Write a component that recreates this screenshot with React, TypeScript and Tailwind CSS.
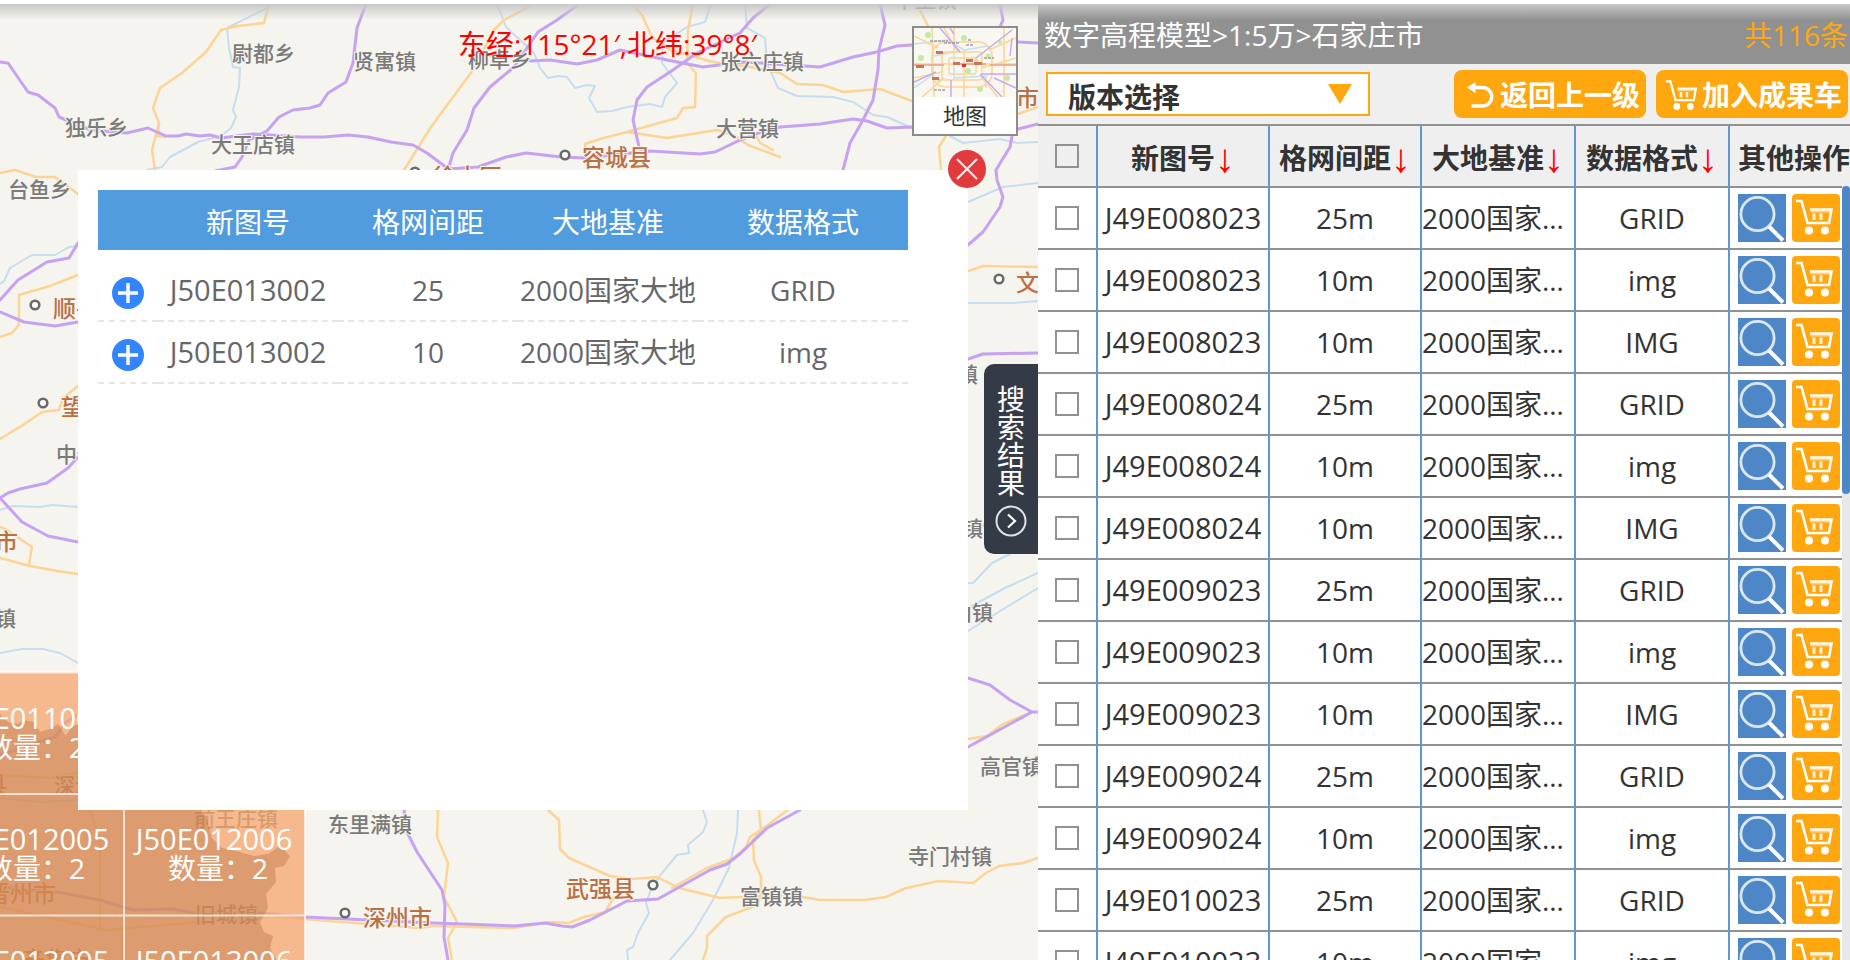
import { useState } from 'react';

interface ResultItem {
  code: string;
  spacing: string;
  datum: string;
  format: string;
}

interface MapLabel {
  text: string;
  x: number;
  y: number;
  city?: boolean;
}

const DATUM = '2000国家大地';

const results: ResultItem[] = [
  { code: 'J49E008023', spacing: '25m', datum: DATUM, format: 'GRID' },
  { code: 'J49E008023', spacing: '10m', datum: DATUM, format: 'img' },
  { code: 'J49E008023', spacing: '10m', datum: DATUM, format: 'IMG' },
  { code: 'J49E008024', spacing: '25m', datum: DATUM, format: 'GRID' },
  { code: 'J49E008024', spacing: '10m', datum: DATUM, format: 'img' },
  { code: 'J49E008024', spacing: '10m', datum: DATUM, format: 'IMG' },
  { code: 'J49E009023', spacing: '25m', datum: DATUM, format: 'GRID' },
  { code: 'J49E009023', spacing: '10m', datum: DATUM, format: 'img' },
  { code: 'J49E009023', spacing: '10m', datum: DATUM, format: 'IMG' },
  { code: 'J49E009024', spacing: '25m', datum: DATUM, format: 'GRID' },
  { code: 'J49E009024', spacing: '10m', datum: DATUM, format: 'img' },
  { code: 'J49E010023', spacing: '25m', datum: DATUM, format: 'GRID' },
  { code: 'J49E010023', spacing: '10m', datum: DATUM, format: 'img' },
];

const sheetItems: ResultItem[] = [
  { code: 'J50E013002', spacing: '25', datum: DATUM, format: 'GRID' },
  { code: 'J50E013002', spacing: '10', datum: DATUM, format: 'img' },
];

const rivers = [
  '267,8 227,28 229,48 233,67 240,68 239,87 233,110 236,117 231,128 221,136 198,142 170,157 162,167 147,170',
  '497,4 506,27 534,53 540,68 548,78 558,76 567,77 575,88 587,85 595,86 589,98 597,112 612,111 627,107 650,104 662,107 665,97 677,83 662,63 663,43 687,27 705,22 711,4',
  '745,4 747,28 765,38 767,63 778,88 797,96 833,97 853,102 873,115 887,117 910,127',
  '950,136 963,143 1000,139 1017,143 1038,142',
  '968,202 1003,187 1038,183',
  '968,303 1014,303 1038,301',
  '0,284 4,281 10,268 32,255 55,255 69,247 78,246',
  '0,510 13,506 40,507 52,505 78,507',
  '0,653 22,649 43,649 60,653 78,663',
  '968,583 973,583 992,563 1010,554',
  '968,608 1005,588 1038,573',
  '968,631 1005,608 1038,588',
  '703,810 707,822 703,832 688,845 689,853 677,855 662,873 652,887 646,903 649,913 638,933 633,947 627,950 628,960',
  '738,810 737,833 729,868 713,900 693,933 670,960',
  '0,798 40,802 78,800',
];

const roads = [
  '269,4 264,23 237,26 221,30 206,52 182,73 160,88 153,108 159,123 152,150 155,170',
  '159,123 158,136 165,137',
  '0,173 15,170 36,177 55,177 78,194',
  '529,7 504,20 494,30 473,70 431,127 404,170',
  '632,4 642,15 652,37 670,50 713,62 745,66 780,73 797,84 823,85 843,92 880,89 912,101',
  '693,4 688,30 687,63 696,73 695,107 683,108 677,118 627,132 600,139 585,144 585,150',
  '627,132 667,138 717,130 735,136 748,145 780,157',
  '757,137 760,143 773,150',
  '920,10 928,26',
  '946,136 939,147 941,170',
  '968,271 983,266 1038,267',
  '1018,114 1038,107',
  '0,337 12,333 19,325 19,295 50,286 78,275',
  '0,439 23,425 42,412 59,410 63,398 78,386',
  '0,527 7,530 32,547 29,564',
  '0,558 30,566 57,571 78,574',
  '1032,712 1003,724 987,736 968,739',
  '983,526 986,522',
  '548,810 559,820 560,849 569,858 610,876 633,879 657,877 679,888 720,898 741,897 782,896 803,897 820,900 865,900 886,897 906,888 939,881 973,883 986,873 999,866 1023,863 1038,858',
  '789,809 765,827 750,837 746,847 734,858 707,868 672,888',
  '759,810 761,830 753,840 754,860 761,877 761,895 757,905 726,917 707,936 707,948 703,960',
  '614,897 605,912 584,917 569,923 550,922 514,928 433,926 420,928 277,917 200,922 107,930 0,907',
  '438,810 437,837 448,863 444,897 457,922 448,938 452,960',
  '90,810 100,843 100,927',
  '122,927 122,960',
  '0,775 50,778 78,773',
];

const highways = [
  '0,62 8,63 28,92 38,95 55,108 59,117 71,122 91,130 127,133 148,128 166,136 178,136 186,134 200,136 210,135 221,138 253,134 300,137 324,137 348,135 368,137 391,142 413,145 427,153 447,168',
  '366,4 357,28 353,63 346,82 328,93 320,105 310,108 293,110 279,117 267,131 249,140 242,157 235,167 215,171',
  '579,4 557,20 538,32 514,67 490,87 474,108 467,130 453,153 448,170',
  '530,61 550,60 577,64 597,60 620,50 667,60 703,67 743,62 820,67 853,57 877,52 897,46 912,45 1018,42 1038,43',
  '770,4 753,18 740,33 697,53 670,72 647,87 637,100 633,120 639,147',
  '448,169 478,167 506,157 526,153 561,157 585,158 650,151 700,154 715,152 740,140 767,130 780,127 820,124 853,119 867,121 887,128 912,127 1018,129 1038,124',
  '880,4 885,25 879,50 878,70 873,100 863,120 850,143 843,170',
  '1000,4 1003,20 1000,27',
  '1012,136 1010,147 996,170 997,180 1003,197 1000,207 983,232 968,245',
  '78,243 69,258 47,262 18,280 0,300',
  '0,312 24,322 55,326 78,322',
  '78,457 68,468 47,483 20,489 8,493 0,498 22,522 48,536 78,542',
  '968,359 983,354 1038,353',
  '968,678 990,685 1010,700 1032,712 1038,712',
  '1032,712 968,747',
  '800,810 767,828 741,853 727,864 710,870 658,899 627,901 590,920 572,927 562,926 545,923 514,926 463,924 433,923 305,917 260,913 193,913 173,909 133,910 100,900 57,892 0,887',
  '404,810 407,832 417,852 442,890 445,905 444,937 448,960',
  '78,715 66,722 55,737 0,755',
];

const towns: [number, number][] = [
  [565, 155],
  [415, 172],
  [653, 885],
  [345, 913],
  [35, 305],
  [43, 403],
  [999, 279],
];

const labels: MapLabel[] = [
  { text: '尉都乡', x: 232, y: 61 },
  { text: '贤寓镇', x: 353, y: 69 },
  { text: '柳卓乡', x: 468, y: 67 },
  { text: '独乐乡', x: 65, y: 135 },
  { text: '大王店镇', x: 211, y: 152 },
  { text: '台鱼乡', x: 8, y: 197 },
  { text: '张六庄镇', x: 720, y: 69 },
  { text: '大营镇', x: 716, y: 136 },
  { text: '中堡镇', x: 894, y: 7 },
  { text: '容城县', x: 582, y: 166, city: true },
  { text: '徐水区', x: 433, y: 185, city: true },
  { text: '市', x: 1016, y: 106, city: true },
  { text: '文安县', x: 1016, y: 291, city: true },
  { text: '顺平县', x: 53, y: 317, city: true },
  { text: '望都县', x: 61, y: 415, city: true },
  { text: '中佐镇', x: 56, y: 462 },
  { text: '市', x: -5, y: 550, city: true },
  { text: '镇', x: -5, y: 626 },
  { text: '镇', x: 957, y: 382 },
  { text: '镇', x: 962, y: 536 },
  { text: '山镇', x: 951, y: 620 },
  { text: '高官镇', x: 980, y: 774 },
  { text: '县', x: -16, y: 793, city: true },
  { text: '深泽', x: 54, y: 793 },
  { text: '前王庄镇', x: 194, y: 826 },
  { text: '旧城镇', x: 195, y: 922 },
  { text: '晋州市', x: -13, y: 902, city: true },
  { text: '辛集市', x: 22, y: 968, city: true },
  { text: '东里满镇', x: 328, y: 832 },
  { text: '深州市', x: 363, y: 926, city: true },
  { text: '武强县', x: 566, y: 897, city: true },
  { text: '富镇镇', x: 740, y: 904 },
  { text: '寺门村镇', x: 908, y: 864 },
];

const sheets = [
  { code: 'J50E011005', x: 31, y: 733 },
  { code: 'J50E012005', x: 31, y: 854 },
  { code: 'J50E012006', x: 214, y: 854 },
  { code: 'J50E013005', x: 31, y: 976 },
  { code: 'J50E013006', x: 214, y: 976 },
];

const BaseMap = () => (
  <svg
    className="absolute inset-0 size-full"
    viewBox="0 4 1038 956"
    preserveAspectRatio="xMinYMin slice"
    aria-hidden="true"
  >
    <g fill="none" strokeLinejoin="round" strokeLinecap="round">
      {rivers.map((points) => (
        <polyline key={points} points={points} stroke="#c8dcf0" strokeWidth="2" />
      ))}
      {roads.map((points) => (
        <polyline key={points} points={points} stroke="#fcd596" strokeWidth="2.5" />
      ))}
      {highways.map((points) => (
        <polyline key={points} points={points} stroke="#c5a3f2" strokeWidth="3" />
      ))}
    </g>
    {towns.map(([cx, cy]) => (
      <circle key={`${cx}-${cy}`} cx={cx} cy={cy} r="4.3" fill="#fff" stroke="#6b6b6b" strokeWidth="2.6" />
    ))}
    {labels.map((label) => (
      <text
        key={`${label.text}-${label.x}-${label.y}`}
        x={label.x}
        y={label.y}
        fontSize={label.city ? 23 : 21}
        fontWeight="500"
        fill={label.city ? '#b97045' : '#7a7a7a'}
        stroke="#f5f4ee"
        strokeWidth="2"
        paintOrder="stroke"
      >
        {label.text}
      </text>
    ))}

    {/* 图幅覆盖范围 */}
    <rect x="0" y="672" width="305" height="288" fill="#f6a66c" fillOpacity="0.75" />
    <path
      d="M0 714 L8 722 L18 724 L24 720 L34 722 L40 732 L52 728 L58 724 L66 736 L72 726 L90 722 L190 800 L200 812 L206 816 L212 838 L222 848 L240 852 L254 856 L268 854 L280 846 L290 856 L284 866 L275 868 L276 882 L266 894 L268 908 L260 922 L264 932 L273 936 L270 948 L276 960 L0 960 Z"
      fill="#a05a2c"
      fillOpacity="0.3"
    />
    <g stroke="#fff" strokeOpacity="0.7" strokeWidth="2">
      <path d="M0 672.5H305M0 794H305M0 915.5H305M124 672V960M305 672V960" fill="none" />
    </g>
    <g fill="#fff" textAnchor="middle">
      {sheets.map((sheet) => (
        <g key={sheet.code}>
          <text x={sheet.x} y={sheet.y - 4} fontSize="29">
            {sheet.code}
          </text>
          <text x={sheet.x + 4} y={sheet.y + 25} fontSize="28">
            数量：2
          </text>
        </g>
      ))}
    </g>
  </svg>
);

const MapThumb = () => (
  <svg className="block h-[69px] w-full" viewBox="0 0 102 69" preserveAspectRatio="none" aria-hidden="true">
    <rect width="102" height="69" fill="#f8f7f1" />
    <g fill="#c3eba0">
      <circle cx="14" cy="7" r="3" />
      <circle cx="50" cy="10" r="3" />
      <circle cx="7" cy="30" r="3" />
      <circle cx="62" cy="33" r="2.5" />
      <circle cx="54" cy="43" r="3" />
      <circle cx="93" cy="50" r="3" />
      <circle cx="66" cy="61" r="3" />
      <circle cx="86" cy="14" r="2" />
      <circle cx="25" cy="52" r="2" />
      <circle cx="74" cy="28" r="2.5" />
    </g>
    <g fill="none" stroke="#c3dff2" strokeWidth="1.5">
      <path d="M0 16L18 14L34 12L50 22L74 18M20 28L40 24V50L72 48V60M0 60L20 46" />
    </g>
    <g fill="none" stroke="#fbd596" strokeWidth="1.5">
      <rect x="28" y="24" width="40" height="28" rx="3" />
      <rect x="35" y="30" width="27" height="16" rx="2" />
      <rect x="18" y="14" width="60" height="45" rx="14" />
      <path d="M0 8L24 20M30 0L44 24M0 36H102M50 24V69M0 50L28 44M68 40L102 30M90 0V69M8 69L30 50M68 50L84 69M40 0V24M18 0L20 69M75 22L102 10" />
    </g>
    <g fill="none" stroke="#c9a7f3" strokeWidth="1.4">
      <path d="M26 0L46 24M62 30L98 2M66 46L88 69M0 54L22 44M37 52V69M68 46H102M80 50L102 60M98 10L96 28M36 0L40 6" />
    </g>
    <g stroke="#e9a08a" strokeWidth="1.5">
      <path d="M0 37H30M40 36H72M76 37H102" />
    </g>
    <g stroke="#8a8f99" strokeOpacity="0.6" strokeWidth="2" strokeDasharray="3 1">
      <path d="M16 13H34M30 15H46M52 17H60M54 12H58M70 30H80M20 62H32" />
    </g>
    <g fill="#cf7452">
      <rect x="22" y="23" width="7" height="3" />
      <rect x="2" y="37" width="8" height="3" />
      <rect x="18" y="49" width="7" height="3" />
      <rect x="39" y="34" width="7" height="3" />
      <rect x="60" y="34" width="8" height="3" />
      <rect x="52" y="31" width="7" height="3" />
    </g>
    <rect x="48" y="36" width="4" height="3" fill="#e03030" />
  </svg>
);

const CartIcon = ({ className, viewBox = '0 0 48 48' }: { className: string; viewBox?: string }) => (
  <svg className={className} viewBox={viewBox} fill="none" stroke="#fff" aria-hidden="true">
    <path d="M4 7H9.5L15.5 29H37L39.5 15.5H18" strokeWidth="2.6" />
    <path d="M18.5 17.5H38" strokeWidth="2" strokeOpacity="0.5" />
    <path d="M22 19.5V26M29 19.5V26" strokeWidth="3" strokeOpacity="0.85" />
    <circle cx="17" cy="36.5" r="4" fill="#fff" stroke="none" />
    <circle cx="33" cy="36.5" r="4" fill="#fff" stroke="none" />
  </svg>
);

const SearchIcon = () => (
  <svg className="size-12" viewBox="0 0 48 48" fill="none" stroke="#fff" aria-hidden="true">
    <circle cx="19.5" cy="20" r="16.6" strokeWidth="2.8" strokeOpacity="0.8" />
    <path d="M31 32.5L45 46.5" strokeWidth="4" />
  </svg>
);

const BackIcon = () => (
  <svg className="size-8" viewBox="0 0 32 32" fill="none" stroke="#fff" aria-hidden="true">
    <path d="M9 8.5H18.5a8.3 8.3 0 0 1 0 18.5H7.5" strokeWidth="3.4" />
    <path d="M3 8.5L11.5 3V14Z" fill="#fff" stroke="none" />
  </svg>
);

const SheetDialog = ({ onClose }: { onClose: () => void }) => (
  <div role="dialog" className="absolute top-[166px] right-[70px] left-[78px] min-h-[640px] bg-white pt-5 pr-[60px] pl-5">
    <button type="button" aria-label="关闭" className="absolute -top-5 -right-[18px] size-[38px]" onClick={onClose}>
      <svg viewBox="0 0 38 38" aria-hidden="true">
        <circle cx="19" cy="19" r="19" fill="#e23b3e" />
        <path d="M9 9L29 29M29 9L9 29" stroke="#fff" strokeWidth="2.2" strokeOpacity="0.9" />
      </svg>
    </button>
    <table className="w-full table-fixed border-separate border-spacing-0 text-center text-[28px] leading-[40px]">
      <colgroup>
        <col className="w-[60px]" />
        <col className="w-[180px]" />
        <col className="w-[180px]" />
        <col className="w-[180px]" />
        <col className="w-[210px]" />
      </colgroup>
      <thead className="bg-[#519cde] text-white">
        <tr className="h-[60px]">
          <th />
          <th className="pt-1 font-normal">新图号</th>
          <th className="pt-1 font-normal">格网间距</th>
          <th className="pt-1 font-normal">大地基准</th>
          <th className="pt-1 font-normal">数据格式</th>
        </tr>
      </thead>
      <tbody className="text-[#666]">
        <tr aria-hidden="true" className="h-2.5" />
        {sheetItems.map((item) => (
          <tr key={item.spacing} className="h-[62px]">
            <td className="border-b-2 border-dashed border-[#e6e6e6]">
              <button type="button" aria-label="添加" className="mx-auto mt-1.5 block size-8">
                <svg viewBox="0 0 32 32" aria-hidden="true">
                  <circle cx="16" cy="16" r="16" fill="#3385ff" />
                  <path d="M6 16H26M16 6V26" stroke="#fff" strokeWidth="3.4" />
                </svg>
              </button>
            </td>
            <td className="border-b-2 border-dashed border-[#e6e6e6] text-[29px] whitespace-nowrap">{item.code}</td>
            <td className="border-b-2 border-dashed border-[#e6e6e6]">{item.spacing}</td>
            <td className="border-b-2 border-dashed border-[#e6e6e6] whitespace-nowrap">{item.datum}</td>
            <td className="border-b-2 border-dashed border-[#e6e6e6]">{item.format}</td>
          </tr>
        ))}
      </tbody>
    </table>
  </div>
);

const HeadCell = ({ children }: { children: string }) => (
  <th className="border-r-2 border-b-2 border-r-[#6197d0] border-b-[#919191] font-bold">
    <div className="flex items-center justify-center pt-1 whitespace-nowrap">
      {children}
      <span className="font-[Liberation_Sans] text-[40px] font-normal text-[#f00]">↓</span>
    </div>
  </th>
);

const cell = 'border-r-2 border-b-2 border-r-[#6197d0] border-b-[#919191]';
const checkbox = 'mx-auto block size-6 appearance-none border-2 border-[#919191] checked:bg-[#4d87c7]';

const ResultTable = () => (
  <div className="relative min-h-0 flex-1 overflow-hidden border-t-2 border-[#919191] bg-white">
    <table className="w-full table-fixed border-separate border-spacing-0 text-center text-[28px] leading-[40px] text-[#333]">
      <colgroup>
        <col className="w-[60px]" />
        <col className="w-[172px]" />
        <col className="w-[152px]" />
        <col className="w-[154px]" />
        <col className="w-[154px]" />
        <col className="w-[120px]" />
      </colgroup>
      <thead className="bg-[#efefef]">
        <tr className="h-[62px]">
          <th className={cell}>
            <input type="checkbox" aria-label="全选" className={checkbox} />
          </th>
          <HeadCell>新图号</HeadCell>
          <HeadCell>格网间距</HeadCell>
          <HeadCell>大地基准</HeadCell>
          <HeadCell>数据格式</HeadCell>
          <th className="border-b-2 border-[#919191] pt-1 pl-2 text-left font-bold whitespace-nowrap">其他操作</th>
        </tr>
      </thead>
      <tbody>
        {results.map((item, index) => (
          <tr key={index} className="h-[62px]">
            <td className={cell}>
              <input type="checkbox" aria-label={item.code} className={checkbox} />
            </td>
            <td className={`${cell} text-[29px] whitespace-nowrap`}>{item.code}</td>
            <td className={cell}>{item.spacing}</td>
            <td className={`${cell} truncate`}>{item.datum}</td>
            <td className={cell}>{item.format}</td>
            <td className="border-b-2 border-[#919191] pl-2">
              <div className="flex gap-1.5">
                <button type="button" aria-label="查看" className="bg-[#4d87c7]">
                  <SearchIcon />
                </button>
                <button type="button" aria-label="加入成果车" className="rounded bg-[#ffa70f]">
                  <CartIcon className="size-12" />
                </button>
              </div>
            </td>
          </tr>
        ))}
      </tbody>
    </table>
    {/* 滚动条 */}
    <div className="absolute top-[60px] right-0 bottom-0 w-2 bg-[#e8e8e8]">
      <div className="h-[308px] rounded bg-[#4d87c7]" />
    </div>
  </div>
);

const ResultPanel = () => (
  <section className="flex min-h-0 min-w-0 flex-col bg-[#efefef]">
    <header className="flex h-[60px] items-center justify-between bg-[#919191] pt-1 pr-0.5 pb-0.5 pl-1.5 text-[28px] text-white">
      <h1>数字高程模型&gt;1:5万&gt;石家庄市</h1>
      <span className="text-[#ffa70f]">共116条</span>
    </header>
    <div className="flex h-[60px] items-center gap-2.5 pr-0.5 pl-2 text-[28px] font-bold">
      <div className="relative mr-auto w-[324px]">
        <select
          aria-label="版本选择"
          className="block h-11 w-full appearance-none border-2 border-[#ffa70f] bg-white pt-0.5 pl-5 text-[#333]"
        >
          <option>版本选择</option>
        </select>
        <svg className="pointer-events-none absolute top-3 right-[18px] h-5 w-6" viewBox="0 0 24 20" aria-hidden="true">
          <path d="M0 0H24L12 20Z" fill="#ffa70f" />
        </svg>
      </div>
      <button
        type="button"
        className="flex h-12 shrink-0 items-center gap-1 rounded-lg bg-[#ffa70f] pt-0.5 pr-1.5 pl-2.5 text-white"
      >
        <BackIcon />
        返回上一级
      </button>
      <button
        type="button"
        className="flex h-12 shrink-0 items-center gap-1 rounded-lg bg-[#ffa70f] pt-0.5 pr-1.5 pl-2 text-white"
      >
        <CartIcon className="size-[34px]" viewBox="2 3 40 40" />
        加入成果车
      </button>
    </div>
    <ResultTable />
  </section>
);

const App = () => {
  const [dialogOpen, setDialogOpen] = useState(true);

  return (
    <div className="h-screen overflow-hidden bg-white pt-1 font-['Open_Sans','Noto_Sans_CJK_SC',sans-serif]">
      <main className="relative grid h-full grid-cols-[1038fr_812fr]">
        <section className="relative overflow-hidden bg-[#f5f4ee]">
          <BaseMap />
          <p className="absolute top-5 left-[458px] text-[28px] leading-[40px] text-[#f00]">东经:115°21′,北纬:39°8′</p>
          <button
            type="button"
            className="absolute top-[22px] right-5 h-[110px] w-[106px] border-2 border-[#8c8c8c] bg-white text-[22px] leading-[37px] text-[#333]"
          >
            <MapThumb />
            地图
          </button>
          {dialogOpen && <SheetDialog onClose={() => setDialogOpen(false)} />}
          <button
            type="button"
            className="absolute top-[360px] right-0 flex h-[190px] w-[54px] flex-col items-center justify-center gap-2 rounded-l-[10px] bg-[#343b47] pt-1 text-[28px] leading-[28px] text-white"
          >
            <span className="w-7">搜索结果</span>
            <svg className="size-8" viewBox="0 0 32 32" fill="none" stroke="#fff" aria-hidden="true">
              <circle cx="16" cy="16" r="14.5" strokeWidth="2" strokeOpacity="0.85" />
              <path d="M13 9.5L20 16L13 22.5" strokeWidth="2.2" />
            </svg>
          </button>
        </section>
        <ResultPanel />
        <div className="pointer-events-none absolute inset-x-0 top-0 h-4 bg-linear-to-b from-[#c8c8c8] to-[#c8c8c8]/0" />
      </main>
    </div>
  );
};

export default App;
